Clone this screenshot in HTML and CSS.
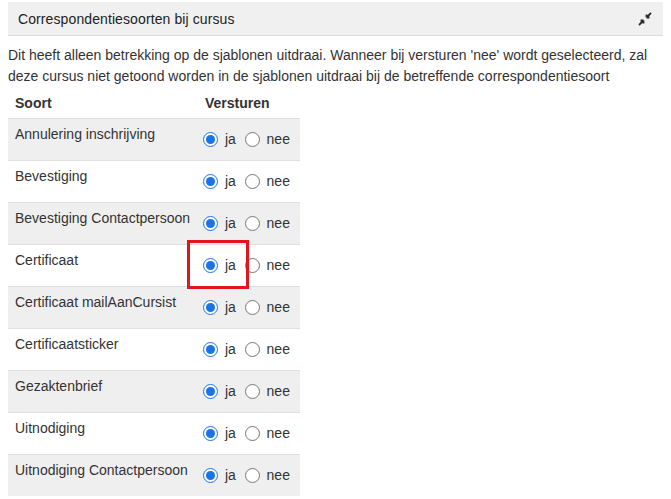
FILE: index.html
```html
<!DOCTYPE html>
<html lang="nl">
<head>
    <meta charset="UTF-8">
    <meta name="viewport" content="width=device-width, initial-scale=1.0">
    <title>Correspondentiesoorten bij cursus</title>
    <link rel="stylesheet" href="styles.css">
</head>
<body>
    <div class="panel">
        <div class="panel-heading">
            <span class="panel-title">Correspondentiesoorten bij cursus</span>
            <svg class="collapse-icon" width="14" height="14" viewBox="0 0 14 14">
                <path d="M13 1 L8.5 5.5 M8.5 5.5 L8.5 2.5 M8.5 5.5 L11.5 5.5" stroke="#2b2b2b" stroke-width="1.8" fill="none"/>
                <path d="M1 13 L5.5 8.5 M5.5 8.5 L5.5 11.5 M5.5 8.5 L2.5 8.5" stroke="#2b2b2b" stroke-width="1.8" fill="none"/>
            </svg>
        </div>

        <p class="intro">Dit heeft alleen betrekking op de sjablonen uitdraai. Wanneer bij versturen 'nee' wordt geselecteerd, zal deze cursus niet getoond worden in de sjablonen uitdraai bij de betreffende correspondentiesoort</p>

        <table class="soorten">
            <thead>
                <tr>
                    <th class="col-soort">Soort</th>
                    <th class="col-versturen">Versturen</th>
                </tr>
            </thead>
            <tbody>
                <tr>
                    <td>Annulering inschrijving</td>
                    <td class="keuze"><label><input type="radio" name="s1" checked> ja</label> <label><input type="radio" name="s1"> nee</label></td>
                </tr>
                <tr>
                    <td>Bevestiging</td>
                    <td class="keuze"><label><input type="radio" name="s2" checked> ja</label> <label><input type="radio" name="s2"> nee</label></td>
                </tr>
                <tr>
                    <td>Bevestiging Contactpersoon</td>
                    <td class="keuze"><label><input type="radio" name="s3" checked> ja</label> <label><input type="radio" name="s3"> nee</label></td>
                </tr>
                <tr>
                    <td>Certificaat</td>
                    <td class="keuze marked"><label><input type="radio" name="s4" checked> ja</label> <label><input type="radio" name="s4"> nee</label><span class="highlight"></span></td>
                </tr>
                <tr>
                    <td>Certificaat mailAanCursist</td>
                    <td class="keuze"><label><input type="radio" name="s5" checked> ja</label> <label><input type="radio" name="s5"> nee</label></td>
                </tr>
                <tr>
                    <td>Certificaatsticker</td>
                    <td class="keuze"><label><input type="radio" name="s6" checked> ja</label> <label><input type="radio" name="s6"> nee</label></td>
                </tr>
                <tr>
                    <td>Gezaktenbrief</td>
                    <td class="keuze"><label><input type="radio" name="s7" checked> ja</label> <label><input type="radio" name="s7"> nee</label></td>
                </tr>
                <tr>
                    <td>Uitnodiging</td>
                    <td class="keuze"><label><input type="radio" name="s8" checked> ja</label> <label><input type="radio" name="s8"> nee</label></td>
                </tr>
                <tr>
                    <td>Uitnodiging Contactpersoon</td>
                    <td class="keuze"><label><input type="radio" name="s9" checked> ja</label> <label><input type="radio" name="s9"> nee</label></td>
                </tr>
            </tbody>
        </table>
    </div>
</body>
</html>
```

FILE: styles.css
```css
body {
    font-family: "Liberation Sans", Arial, sans-serif;
    font-size: 14px;
    margin: 0;
    padding: 2px 8px 0 8px;
    background-color: #fff;
    color: #333;
}
.panel-heading {
    display: flex;
    align-items: center;
    justify-content: space-between;
    height: 33px;
    padding: 0 11px 0 10px;
    background-color: #f0f0f0;
    border-bottom: 1px solid #dcdcdc;
}
.panel-title {
    font-size: 14px;
    color: #222;
    letter-spacing: 0.1px;
}
.collapse-icon {
    display: block;
}
.intro {
    margin: 9px 0 0 0;
    line-height: 21px;
}
.soorten {
    border-collapse: collapse;
    margin-top: 2px;
}
.soorten th {
    text-align: left;
    font-weight: bold;
    padding: 5px 7px 6px 7px;
    line-height: 18px;
}
.soorten th.col-soort {
    width: 176px;
}
.soorten th.col-versturen {
    width: 88px;
    padding-left: 7px;
}
.soorten td {
    vertical-align: top;
    padding: 6px 7px 0 7px;
    height: 35px;
    line-height: 18px;
    border-top: 1px solid #dedede;
}
.soorten tbody tr:nth-child(odd) td {
    background-color: #efefef;
}
.soorten td.keuze {
    padding: 11px 0 0 0;
    white-space: nowrap;
    height: 30px;
}
.keuze label {
    cursor: pointer;
}
.keuze input[type="radio"] {
    margin: 0 3px 0 5px;
    width: 15px;
    height: 15px;
    vertical-align: -3px;
    accent-color: #1a73e8;
}
.marked {
    position: relative;
}
.highlight {
    position: absolute;
    left: -11px;
    top: -5px;
    width: 56px;
    height: 43px;
    border: 3px solid #e3141b;
    pointer-events: none;
}
```
